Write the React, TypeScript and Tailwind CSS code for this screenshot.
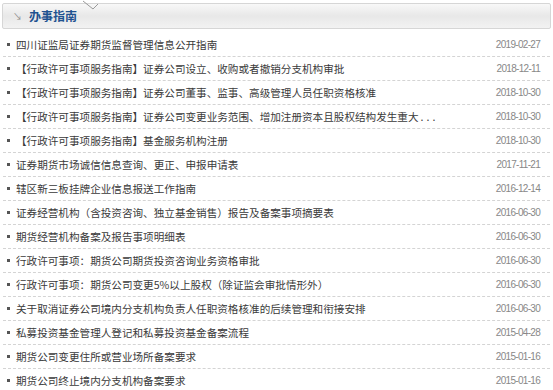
const items = [
  { title: "四川证监局证券期货监督管理信息公开指南", date: "2019-02-27" },
  { title: "【行政许可事项服务指南】证券公司设立、收购或者撤销分支机构审批", date: "2018-12-11" },
  { title: "【行政许可事项服务指南】证券公司董事、监事、高级管理人员任职资格核准", date: "2018-10-30" },
  { title: "【行政许可事项服务指南】证券公司变更业务范围、增加注册资本且股权结构发生重大", date: "2018-10-30", more: true },
  { title: "【行政许可事项服务指南】基金服务机构注册", date: "2018-10-30" },
  { title: "证券期货市场诚信信息查询、更正、申报申请表", date: "2017-11-21" },
  { title: "辖区新三板挂牌企业信息报送工作指南", date: "2016-12-14" },
  { title: "证券经营机构（含投资咨询、独立基金销售）报告及备案事项摘要表", date: "2016-06-30" },
  { title: "期货经营机构备案及报告事项明细表", date: "2016-06-30" },
  { title: "行政许可事项：期货公司期货投资咨询业务资格审批", date: "2016-06-30" },
  { title: "行政许可事项：期货公司变更5%以上股权（除证监会审批情形外）", date: "2016-06-30" },
  { title: "关于取消证券公司境内分支机构负责人任职资格核准的后续管理和衔接安排", date: "2016-06-30" },
  { title: "私募投资基金管理人登记和私募投资基金备案流程", date: "2015-04-28" },
  { title: "期货公司变更住所或营业场所备案要求", date: "2015-01-16" },
  { title: "期货公司终止境内分支机构备案要求", date: "2015-01-16" },
]

const App = () => {
  return (
    <div className="w-[553px] h-[390px] overflow-hidden bg-white font-['Noto_Sans_CJK_SC',sans-serif]">
      <div className="relative mx-[2px] mt-[3px] h-[26px] border border-[#d6d6d6] rounded-[2px] bg-gradient-to-b from-[#f8f8f8] via-[#e8e8e8] to-[#f2f2f2] flex items-center">
        <svg className="absolute left-[78px] -top-[4px]" width="20" height="12" viewBox="0 0 20 12">
          <path d="M2 1 L12 9 L17 4" fill="none" stroke="#9a9a9a" strokeWidth="1" />
        </svg>
        <span className="ml-[10px] text-[9px] leading-none text-[#8a8a8a]">↘</span>
        <span className="ml-[7px] text-[12px] font-bold leading-[16px] text-[#1f5290]">办事指南</span>
      </div>
      <ul className="mt-[4px] mx-[3px]">
        {items.map((item, i) => (
          <li
            key={i}
            className="flex items-center h-[24px] border-b border-dashed border-[#d4d4d4] pl-[4px] pr-[10px]"
          >
            <span className="w-[3px] h-[3px] bg-[#555] mr-[6px] shrink-0" />
            <span className="flex-1 whitespace-nowrap overflow-hidden text-[10.6px] leading-[16px] text-[#3a3a3a]">
              {item.title}
              {item.more && <span className="ml-[2px] tracking-[3px]">...</span>}
            </span>
            <span className="ml-2 text-[10px] leading-[14px] tracking-[-0.7px] text-[#888] font-['Liberation_Sans',sans-serif]">{item.date}</span>
          </li>
        ))}
      </ul>
    </div>
  )
}

export default App
